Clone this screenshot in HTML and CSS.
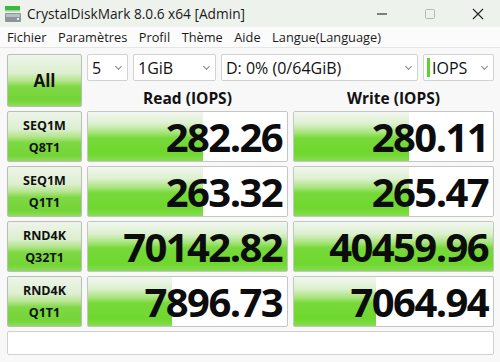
FILE: index.html
```html
<!DOCTYPE html>
<html>
<head>
<meta charset="utf-8">
<link rel="stylesheet" href="styles.css">
</head>
<body>
<div class="window">
  <div class="titlebar">
    <svg class="app-icon" width="18" height="18" viewBox="0 0 18 18">
      <rect x="1" y="1" width="15" height="4" fill="#3cb93c"/>
      <rect x="1" y="5" width="15" height="1.5" fill="#8fd88f"/>
      <rect x="1" y="8" width="16" height="9" rx="1" fill="#8e9499"/>
      <rect x="2" y="9" width="14" height="3" fill="#b9bec2"/>
      <rect x="13" y="13" width="2" height="2" fill="#e8ecef"/>
    </svg>
    <span class="title">CrystalDiskMark 8.0.6 x64 [Admin]</span>
    <div class="winctl">
      <svg width="14" height="14" viewBox="0 0 14 14"><line x1="2" y1="7" x2="12" y2="7" stroke="#222" stroke-width="1.1"/></svg>
      <svg width="14" height="14" viewBox="0 0 14 14"><rect x="2.5" y="2.5" width="9" height="9" rx="1" fill="none" stroke="#b5b5b5" stroke-width="1"/></svg>
      <svg width="14" height="14" viewBox="0 0 14 14"><path d="M2 2 L12 12 M12 2 L2 12" stroke="#222" stroke-width="1.1"/></svg>
    </div>
  </div>
  <div class="menubar">
    <span>Fichier</span><span>Paramètres</span><span>Profil</span><span>Thème</span><span>Aide</span><span>Langue(Language)</span>
  </div>
  <div class="main">
    <div class="btn all">All</div>
    <div class="controls">
      <div class="sel s-count"><span>5</span><i class="chev"></i></div>
      <div class="sel s-size"><span>1GiB</span><i class="chev"></i></div>
      <div class="sel s-drive"><span>D: 0% (0/64GiB)</span><i class="chev"></i></div>
      <div class="sel s-unit"><b class="mark"></b><span>IOPS</span><i class="chev"></i></div>
    </div>
    <div class="head">Read (IOPS)</div>
    <div class="head">Write (IOPS)</div>

    <div class="btn label">SEQ1M<br>Q8T1</div>
    <div class="cell"><div class="bar" style="width:58%"></div><span class="val">282.26</span></div>
    <div class="cell"><div class="bar" style="width:58%"></div><span class="val">280.11</span></div>

    <div class="btn label">SEQ1M<br>Q1T1</div>
    <div class="cell"><div class="bar" style="width:58%"></div><span class="val">263.32</span></div>
    <div class="cell"><div class="bar" style="width:58%"></div><span class="val">265.47</span></div>

    <div class="btn label">RND4K<br>Q32T1</div>
    <div class="cell"><div class="bar" style="width:100%"></div><span class="val">70142.82</span></div>
    <div class="cell"><div class="bar" style="width:100%"></div><span class="val">40459.96</span></div>

    <div class="btn label">RND4K<br>Q1T1</div>
    <div class="cell"><div class="bar" style="width:42%"></div><span class="val">7896.73</span></div>
    <div class="cell"><div class="bar" style="width:41%"></div><span class="val">7064.94</span></div>

    <div class="comment"></div>
  </div>
</div>
</body>
</html>
```
FILE: styles.css
```css
* { box-sizing: border-box; }
html, body { margin: 0; padding: 0; }
body {
  width: 500px;
  height: 362px;
  overflow: hidden;
  background: #f7f8f7;
  font-family: "Open Sans", "Noto Sans", sans-serif;
  color: #111;
}
.titlebar {
  height: 27px;
  background: #eef2ed;
  display: flex;
  align-items: center;
  padding-left: 4px;
}
.app-icon { margin-right: 5px; }
.title { font-size: 13.7px; color: #1a1a1a; }
.winctl {
  margin-left: auto;
  display: flex;
  gap: 34px;
  padding-right: 15px;
}
.menubar {
  height: 21px;
  background: #fbfbfb;
  border-bottom: 1px solid #e6e6e6;
  display: flex;
  align-items: center;
  gap: 11.5px;
  padding-left: 7px;
  font-size: 12.8px;
  color: #1a1a1a;
}
.main {
  display: grid;
  grid-template-columns: 75px 201px 201px;
  grid-template-rows: 27px 22px 51px 51px 51px 51px 24px;
  column-gap: 5px;
  row-gap: 4px;
  padding: 6px 0 0 7px;
}
.btn {
  border: 1px solid #b9bfb6;
  border-radius: 2px;
  background: linear-gradient(to bottom, #eef4ea 0%, #dcefcf 35%, #b6e58f 50%, #7fd845 62%, #74d436 88%, #8fdc5c 100%);
  display: flex;
  align-items: center;
  justify-content: center;
  text-align: center;
  font-weight: 700;
}
.all {
  grid-row: 1 / span 2;
  font-size: 17px;
}
.label {
  font-size: 12.5px;
  line-height: 22px;
}
.controls {
  grid-column: 2 / span 2;
  display: flex;
  gap: 5px;
}
.sel {
  background: #fff;
  border: 1px solid #d2d2d2;
  border-radius: 2px;
  height: 27px;
  display: flex;
  align-items: center;
  padding: 0 6px 0 4px;
  font-size: 16px;
  color: #111;
}
.sel span { flex: 1; }
.s-count { width: 41px; }
.s-size { width: 83px; }
.s-drive { width: 197px; }
.s-unit { width: 71px; padding-left: 3px; }
.mark {
  width: 3px;
  height: 19px;
  background: #5fd12a;
  margin-right: 2px;
}
.chev {
  width: 5px;
  height: 5px;
  border-right: 1px solid #888;
  border-bottom: 1px solid #888;
  transform: rotate(45deg);
  margin-top: -3px;
}
.head {
  font-size: 15.5px;
  font-weight: 700;
  text-align: center;
  line-height: 22px;
  padding-top: 2px;
}
.cell {
  position: relative;
  background: #fff;
  border: 1px solid #c4c6c3;
  border-radius: 2px;
  display: flex;
  align-items: center;
  justify-content: flex-end;
}
.bar {
  position: absolute;
  left: 0;
  top: 0;
  bottom: 0;
  background: linear-gradient(to bottom, #f3f7f1 0%, #dcf0ce 24%, #a8e47c 42%, #77d93a 53%, #6fd72e 85%, #86dd52 100%);
}
.val {
  position: relative;
  font-size: 40px;
  font-weight: 700;
  letter-spacing: -1.6px;
  line-height: 48px;
  padding-right: 5px;
  color: #0c0c0c;
}
.comment {
  grid-column: 1 / span 3;
  background: #fff;
  border: 1px solid #cfd1ce;
  border-radius: 2px;
}
```
